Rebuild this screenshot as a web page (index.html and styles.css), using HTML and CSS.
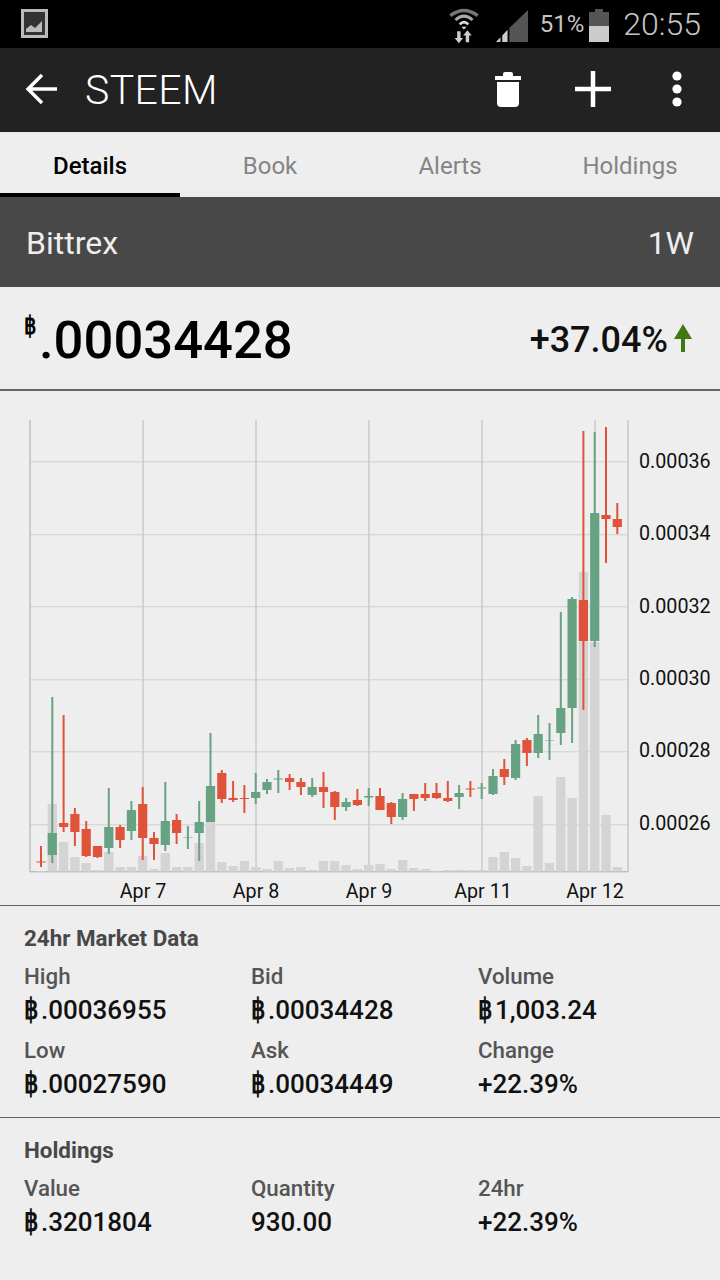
FILE: index.html
```html
<!DOCTYPE html>
<html lang="en">
<head>
    <meta charset="UTF-8">
    <meta name="viewport" content="width=device-width, initial-scale=1.0">
    <title>STEEM Details</title>
    <link rel="stylesheet" href="styles.css">
</head>
<body>

<div class="status-bar">
    <svg class="status-pic" width="30" height="30" viewBox="0 0 30 30">
        <rect x="1.5" y="1.5" width="24" height="26" fill="#333" stroke="#bbb" stroke-width="3"/>
        <path d="M5 23 L5 20 L10 16 L14 19 L21 12 L21 23 Z" fill="#bbb"/>
    </svg>
    <div class="status-right">
        <svg class="status-wifi" width="34" height="36" viewBox="0 0 36 42">
            <path d="M2 9 Q18 -3 34 9" fill="none" stroke="#777" stroke-width="4"/>
            <path d="M8 14 Q18 5 28 14" fill="none" stroke="#aaa" stroke-width="3.5"/>
            <path d="M13 19 Q18 14 23 19" fill="none" stroke="#ddd" stroke-width="3"/>
            <path d="M15 22 L21 22 L18 25 Z" fill="#ddd"/>
            <path d="M10 27 H14 V35 H17 L12 41 L7 35 H10 Z" fill="#ccc"/>
            <path d="M20 40 H24 V32 H27 L22 26 L17 32 H20 Z" fill="#ccc"/>
        </svg>
        <svg class="status-signal" width="32" height="32" viewBox="0 0 36 34" preserveAspectRatio="none">
            <path d="M0 34 L5 29 V34 Z" fill="#ccc"/>
            <path d="M7 27 L13 21 V34 H7 Z" fill="#ccc"/>
            <path d="M15 19 L36 0 V34 H15 Z" fill="#555"/>
        </svg>
        <span class="status-pct">51%</span>
        <svg class="status-batt" width="20" height="33" viewBox="0 0 20 33">
            <rect x="6" y="0" width="8" height="4" fill="#555"/>
            <rect x="0" y="3" width="20" height="14" fill="#555"/>
            <rect x="0" y="17" width="20" height="16" fill="#ccc"/>
        </svg>
        <span class="status-time">20:55</span>
    </div>
</div>

<div class="app-bar">
    <svg class="back-icon" width="34" height="34" viewBox="0 0 34 34">
        <path d="M32 17 H4 M17 3 L3 17 L17 31" fill="none" stroke="#fff" stroke-width="3.4"/>
    </svg>
    <div class="app-title">STEEM</div>
    <svg class="trash-icon" width="28" height="36" viewBox="0 0 28 36">
        <path d="M1 5 H9 V3 Q9 1 11 1 H17 Q19 1 19 3 V5 H27 V9 H1 Z M3 11 H25 V32 Q25 36 21 36 H7 Q3 36 3 32 Z" fill="#fff"/>
    </svg>
    <svg class="plus-icon" width="36" height="36" viewBox="0 0 36 36">
        <path d="M0 18 H36 M18 0 V36" fill="none" stroke="#fff" stroke-width="4.5"/>
    </svg>
    <svg class="more-icon" width="12" height="36" viewBox="0 0 12 36">
        <circle cx="6" cy="5" r="4.6" fill="#fff"/>
        <circle cx="6" cy="18" r="4.6" fill="#fff"/>
        <circle cx="6" cy="31" r="4.6" fill="#fff"/>
    </svg>
</div>

<div class="tabs">
    <div class="tab tab-active">Details</div>
    <div class="tab">Book</div>
    <div class="tab">Alerts</div>
    <div class="tab">Holdings</div>
</div>

<div class="exchange-bar">
    <span>Bittrex</span>
    <span>1W</span>
</div>

<div class="price-row">
    <div class="price"><span class="price-sym">฿</span>.00034428</div>
    <div class="change">
        +37.04%
        <svg width="18" height="28" viewBox="0 0 18 28">
            <path d="M9 0 L18 15 H11 V28 H7 V15 H0 Z" fill="#41780f"/>
        </svg>
    </div>
</div>

<div class="chart-box">
    <svg id="chart" width="720" height="514" viewBox="0 391 720 514"></svg>
</div>

<div class="data-section">
    <div class="section-title">24hr Market Data</div>
    <div class="data-grid">
        <div class="cell"><div class="cell-label">High</div><div class="cell-value"><span class="sym">฿</span>.00036955</div></div>
        <div class="cell"><div class="cell-label">Bid</div><div class="cell-value"><span class="sym">฿</span>.00034428</div></div>
        <div class="cell"><div class="cell-label">Volume</div><div class="cell-value"><span class="sym">฿</span>1,003.24</div></div>
        <div class="cell"><div class="cell-label">Low</div><div class="cell-value"><span class="sym">฿</span>.00027590</div></div>
        <div class="cell"><div class="cell-label">Ask</div><div class="cell-value"><span class="sym">฿</span>.00034449</div></div>
        <div class="cell"><div class="cell-label">Change</div><div class="cell-value">+22.39%</div></div>
    </div>
</div>

<div class="data-section">
    <div class="section-title">Holdings</div>
    <div class="data-grid">
        <div class="cell"><div class="cell-label">Value</div><div class="cell-value"><span class="sym">฿</span>.3201804</div></div>
        <div class="cell"><div class="cell-label">Quantity</div><div class="cell-value">930.00</div></div>
        <div class="cell"><div class="cell-label">24hr</div><div class="cell-value">+22.39%</div></div>
    </div>
</div>

<script src="chart.js"></script>
</body>
</html>
```

FILE: styles.css
```css
* {
    box-sizing: border-box;
}
body {
    margin: 0;
    width: 720px;
    height: 1280px;
    overflow: hidden;
    background-color: #eeeeee;
    font-family: Roboto, "Noto Sans", sans-serif;
}
.status-bar {
    height: 48px;
    background-color: #000;
    display: flex;
    align-items: center;
    justify-content: space-between;
    padding: 0 19px 0 21px;
}
.status-right {
    display: flex;
    align-items: center;
    color: #c4c4c4;
}
.status-wifi {
    margin-right: 15px;
    margin-top: 3px;
}
.status-signal {
    margin-right: 12px;
    margin-top: 3px;
}
.status-pct {
    font-size: 24px;
    margin-right: 5px;
}
.status-batt {
    margin-right: 14px;
    margin-top: 2px;
}
.status-time {
    font-size: 32px;
    font-weight: 300;
}
.app-bar {
    height: 85px;
    background-color: #222222;
    border-bottom: 1px solid #e8e8e8;
    display: flex;
    align-items: center;
    padding: 0 37px 2px 25px;
    color: #fff;
}
.app-title {
    font-size: 41px;
    font-weight: 300;
    letter-spacing: 0.4px;
    margin-left: 26px;
    margin-top: 2px;
    flex: 1;
}
.trash-icon {
    margin-right: 53px;
}
.plus-icon {
    margin-right: 60px;
}
.tabs {
    height: 64px;
    display: grid;
    grid-template-columns: repeat(4, 180px);
    background-color: #eeeeee;
}
.tab {
    display: flex;
    align-items: center;
    justify-content: center;
    font-size: 24px;
    color: #858585;
    padding-top: 2px;
}
.tab-active {
    color: #000;
    font-weight: 500;
    border-bottom: 4px solid #000;
    padding-top: 6px;
}
.exchange-bar {
    height: 90px;
    background-color: #484848;
    color: #eeeeee;
    font-size: 32px;
    display: flex;
    align-items: center;
    justify-content: space-between;
    padding: 2px 26px 0;
}
.price-row {
    height: 104px;
    border-bottom: 2px solid #666;
    display: flex;
    align-items: center;
    justify-content: space-between;
    padding: 4px 28px 0 24px;
}
.price {
    font-size: 52.6px;
    font-weight: 500;
    color: #000;
    display: flex;
}
.price-sym {
    font-family: "Liberation Sans", sans-serif;
    font-size: 25px;
    font-weight: 700;
    line-height: 1;
    margin-top: 4px;
    display: inline-block;
    width: 15px;
    transform: scaleX(0.78);
    transform-origin: left;
}
.change {
    font-size: 36px;
    font-weight: 500;
    color: #111;
    display: flex;
    align-items: center;
    gap: 6px;
}
.change svg {
    margin-top: -4px;
}
.chart-box {
    height: 515px;
    border-bottom: 1px solid #666;
}
#chart {
    display: block;
}
.axis-text {
    font-family: Roboto, sans-serif;
    font-size: 19.7px;
    fill: #111;
}
.data-section {
    padding: 19px 0 0 24px;
    height: 212px;
    border-bottom: 1px solid #666;
}
.data-section:last-child {
    border-bottom: none;
}
.section-title {
    font-size: 22.4px;
    font-weight: 700;
    color: #484848;
    line-height: 26px;
    margin-bottom: 12px;
}
.data-grid {
    display: grid;
    grid-template-columns: repeat(3, 227px);
    row-gap: 12px;
}
.cell-label {
    font-size: 22.3px;
    font-weight: 500;
    color: #555;
    line-height: 26px;
}
.cell-value {
    font-size: 26px;
    font-weight: 500;
    color: #111;
    line-height: 30px;
    margin-top: 6px;
}
.sym {
    font-family: "Liberation Sans", sans-serif;
    font-size: 29px;
    font-weight: 700;
    line-height: 0;
    display: inline-block;
    width: 17px;
    transform: scaleX(0.78);
    transform-origin: left;
}
```

FILE: chart.js
```js
// Each candle: colour, wick top, wick bottom, body top, body bottom, volume top
const candles = [
    ["r", 846, 867, 861.5, 862.5, 871],
    ["g", 697, 863, 833, 855, 804],
    ["r", 715, 832, 823, 827, 842],
    ["r", 808, 846, 814, 832, 857],
    ["r", 821, 857, 829, 856, 863],
    ["r", 846, 858, 846, 857, 870],
    ["g", 788, 854, 827, 848, 852],
    ["r", 825, 848, 827, 840, 867],
    ["g", 801, 840, 810, 831, 867],
    ["r", 787, 860, 804, 838, 856],
    ["r", 832, 860, 838, 844, 869],
    ["g", 782, 851, 821, 845, 853],
    ["r", 814, 844, 820, 833, 867],
    ["g", 826, 849, 837, 837.5, 867],
    ["g", 801, 861, 822, 833, 843],
    ["g", 733, 822, 786, 822, 822],
    ["r", 770, 803, 773, 799, 862],
    ["r", 781, 802, 798, 800, 866],
    ["r", 785, 813, 798, 799, 861],
    ["g", 773, 804, 792, 798, 867],
    ["g", 779, 794, 782, 790, 869],
    ["g", 770, 793, 778.5, 779.5, 861],
    ["r", 774, 790, 778, 782, 868],
    ["r", 778, 795, 782, 787, 867],
    ["g", 778, 797, 787, 795, 870],
    ["r", 772, 808, 787, 792, 861],
    ["r", 791, 820, 792, 807, 861],
    ["g", 798, 811, 802, 807, 865],
    ["r", 789, 806, 800, 805, 869],
    ["g", 788, 806, 796, 797.5, 865],
    ["r", 788, 810, 796, 810, 864],
    ["r", 802, 824, 803, 817, 869],
    ["g", 793, 820, 799, 817, 860],
    ["r", 794, 811, 794, 799, 868],
    ["r", 783, 801, 794, 798, 869],
    ["r", 783, 799, 793, 798, 871],
    ["r", 781, 802, 798, 801, 870],
    ["g", 785, 809, 793, 797, 870],
    ["r", 781, 797, 788.5, 789.5, 870],
    ["g", 783, 799, 787.5, 788.5, 870],
    ["g", 769, 795, 776, 794, 857],
    ["r", 759, 785, 769, 777, 852],
    ["g", 740, 780, 744, 778, 858],
    ["r", 738, 766, 740, 753, 866],
    ["g", 715, 758, 734, 753, 796],
    ["g", 723, 760, 740, 740.5, 863],
    ["g", 612, 745, 708, 733, 777],
    ["g", 597, 743, 599, 708, 798],
    ["r", 431, 710, 600, 641, 572],
    ["g", 432, 647, 513, 641, 642],
    ["r", 427, 563, 515, 519, 815],
    ["r", 503, 534, 519, 527, 867]
];

const svg = document.getElementById("chart");
const bottom = 871.5;
let markup = "";

function rect(x, y, w, h, fill) {
    markup += `<rect x="${x}" y="${y}" width="${w}" height="${h}" fill="${fill}"/>`;
}

// Grid lines
[461, 534, 606, 679, 751, 824].forEach(y => rect(30, y, 598, 1.4, "#d8d8d8"));
[143, 256, 369, 482, 595].forEach(x => rect(x - 0.7, 420, 1.4, 451, "#c8c8c8"));
rect(29.3, 420, 1.4, 452, "#bcbcbc");
rect(627.3, 420, 1.4, 452, "#c4c4c4");
rect(30, 871, 598, 1.4, "#bcbcbc");

// Volume bars go behind the candles
candles.forEach((c, i) => {
    const x = 41 + i * 11.3;
    rect(x - 4.7, c[5], 9.4, bottom - c[5], "#d4d4d4");
});

candles.forEach((c, i) => {
    const x = 41 + i * 11.3;
    const color = c[0] === "g" ? "#67a283" : "#e0533b";
    rect(x - 1, c[1], 2, c[2] - c[1], color);
    rect(x - 4.6, c[3], 9.2, c[4] - c[3], color);
});

// Axis labels
[["0.00036", 468], ["0.00034", 540], ["0.00032", 613], ["0.00030", 685], ["0.00028", 757], ["0.00026", 830]].forEach(l => {
    markup += `<text class="axis-text" x="639" y="${l[1]}">${l[0]}</text>`;
});
[["Apr 7", 143], ["Apr 8", 256], ["Apr 9", 369], ["Apr 11", 483], ["Apr 12", 595]].forEach(l => {
    markup += `<text class="axis-text" x="${l[1]}" y="898" text-anchor="middle">${l[0]}</text>`;
});

svg.innerHTML = markup;
```
